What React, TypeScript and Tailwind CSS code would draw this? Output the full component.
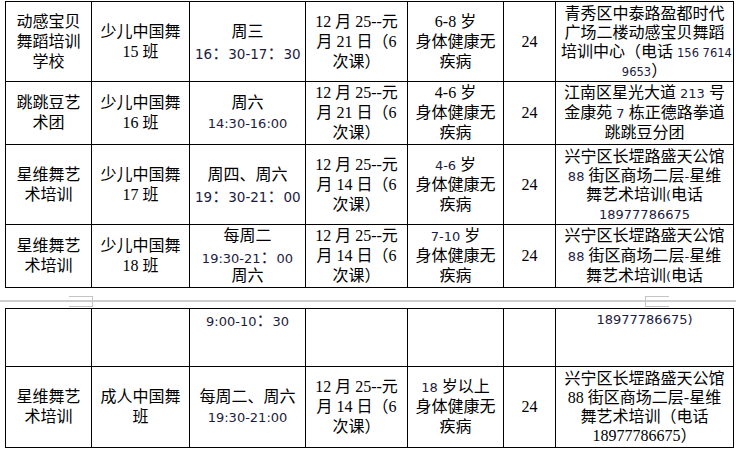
import React from "react";

// YaHei-looking digits in the source doc; fullwidth colons stay in the CJK font
function N({ children, s = "text-[13px]" }: { children: string; s?: string }) {
  const parts = children.split("：");
  return (
    <span className={"font-['DejaVu_Sans',sans-serif] text-[#1c1c40] " + s}>
      {parts.map((p, i) => (
        <React.Fragment key={i}>
          {i > 0 && <span className="font-['Noto_Sans_CJK_SC',sans-serif] text-[16px]">：</span>}
          {p}
        </React.Fragment>
      ))}
    </span>
  );
}

type Cell = React.ReactNode;

const widths = ["w-[86px]", "w-[98px]", "w-[116px]", "w-[102px]", "w-[96px]", "w-[52px]", "w-[178px]"];

const td = "border border-black px-[5px] py-0 text-center align-middle leading-[20px]";

function Lines({ lines }: { lines: Cell[] }) {
  const lh = lines.length > 3 ? "h-[19px] leading-[19px]" : "h-[20px] leading-[20px]";
  return (
    <>
      {lines.map((l, i) => (
        <div key={i} className={"overflow-visible whitespace-nowrap " + lh}>
          {l}
        </div>
      ))}
    </>
  );
}

const date14 = ["12 月 25--元", "月 14 日（6", "次课）"];
const date21 = ["12 月 25--元", "月 21 日（6", "次课）"];
const healthy = ["身体健康无", "疾病"];

const addrXw: Cell[] = [
  "兴宁区长堽路盛天公馆",
  <>
    <N>88</N> 街区商场二层<N>-</N>星维
  </>,
  <>
    舞艺术培训<N>(</N>电话
  </>,
];

type Row = { h: string; top?: boolean; cells: Cell[][] };

const rows1: Row[] = [
  {
    h: "h-[80px]",
    cells: [
      ["动感宝贝", "舞蹈培训", "学校"],
      ["少儿中国舞", "15 班"],
      ["周三", <N s="text-[13.5px]">16：30-17：30</N>],
      date21,
      ["6-8 岁", ...healthy],
      ["24"],
      [
        "青秀区中泰路盈都时代",
        "广场二楼动感宝贝舞蹈",
        <>
          培训中心（电话 <N s="text-[11.5px]">156 7614</N>
        </>,
        <>
          <N s="text-[11.5px]">9653</N>）
        </>,
      ],
    ],
  },
  {
    h: "h-[63px]",
    cells: [
      ["跳跳豆艺", "术团"],
      ["少儿中国舞", "16 班"],
      ["周六", <N>14:30-16:00</N>],
      date21,
      ["4-6 岁", ...healthy],
      ["24"],
      [
        <>
          江南区星光大道 <N>213</N> 号
        </>,
        <>
          金康苑 <N>7</N> 栋正德路拳道
        </>,
        "跳跳豆分团",
      ],
    ],
  },
  {
    h: "h-[80px]",
    cells: [
      ["星维舞艺", "术培训"],
      ["少儿中国舞", "17 班"],
      ["周四、周六", <N s="text-[13.5px]">19：30-21：00</N>],
      date14,
      [
        <>
          <N>4-6</N> 岁
        </>,
        ...healthy,
      ],
      ["24"],
      [...addrXw, <N>18977786675</N>],
    ],
  },
  {
    h: "h-[63px]",
    cells: [
      ["星维舞艺", "术培训"],
      ["少儿中国舞", "18 班"],
      ["每周二", <N>19:30-21：00</N>, "周六"],
      date14,
      [
        <>
          <N>7-10</N> 岁
        </>,
        ...healthy,
      ],
      ["24"],
      addrXw,
    ],
  },
];

const rows2: Row[] = [
  {
    h: "h-[58px]",
    top: true,
    cells: [[], [], [<N>9:00-10：30</N>], [], [], [], [<N>18977786675)</N>]],
  },
  {
    h: "h-[81px]",
    cells: [
      ["星维舞艺", "术培训"],
      ["成人中国舞", "班"],
      ["每周二、周六", <N>19:30-21:00</N>],
      date14,
      [
        <>
          <N>18</N> 岁以上
        </>,
        ...healthy,
      ],
      ["24"],
      ["兴宁区长堽路盛天公馆", "88 街区商场二层-星维", "舞艺术培训（电话", "18977786675）"],
    ],
  },
];

function Table({ rows }: { rows: Row[] }) {
  return (
    <table className="ml-[5px] w-[729px] table-fixed border-collapse">
      <colgroup>
        {widths.map((w) => (
          <col key={w} className={w} />
        ))}
      </colgroup>
      <tbody>
        {rows.map((r, ri) => (
          <tr key={ri} className={r.h}>
            {r.cells.map((c, ci) => (
              <td key={ci} className={td + (r.top ? " !align-top" : "")}>
                <Lines lines={c} />
              </td>
            ))}
          </tr>
        ))}
      </tbody>
    </table>
  );
}

export default function App() {
  return (
    <div className="w-[736px] h-[450px] overflow-hidden bg-white pt-[1px] text-[16px] text-black font-['Liberation_Serif','Noto_Sans_CJK_SC',serif]">
      <Table rows={rows1} />
      {/* page break */}
      <div className="relative h-[20px] pt-[12px]">
        <div className="h-[2px] bg-[#cdcdcd]" />
        <div className="absolute left-[69px] top-[8px] h-[11px] w-[24px] border border-l-0 border-[#c4c4c4]" />
        <div className="absolute left-[645px] top-[8px] h-[11px] w-[24px] border border-r-0 border-[#c4c4c4]" />
      </div>
      <Table rows={rows2} />
    </div>
  );
}
